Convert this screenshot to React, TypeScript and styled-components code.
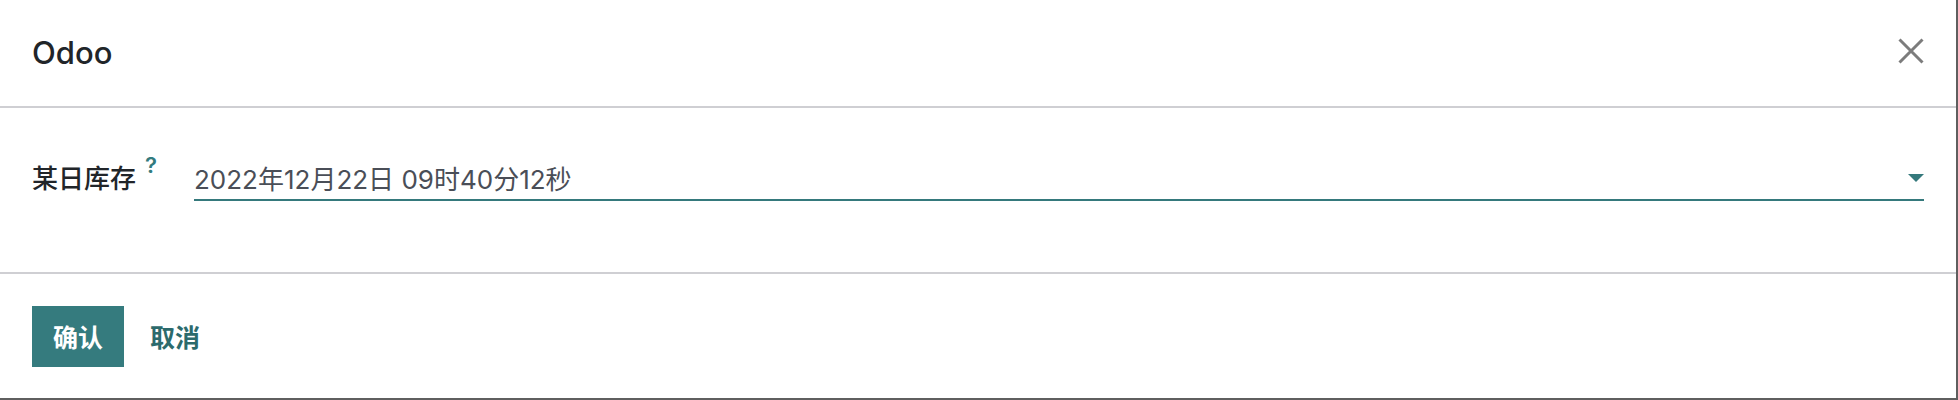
import React from 'react'
import styled, { createGlobalStyle } from 'styled-components'

const GlobalStyle = createGlobalStyle`
    html, body {
        margin: 0;
        padding: 0;
        background: #ffffff;
    }
    body {
        font-family: Inter, "Noto Sans CJK SC", sans-serif;
    }
`

const Dialog = styled.div`
    width: 1958px;
    height: 400px;
    box-sizing: border-box;
    border-right: 2px solid #5f5f5f;
    border-bottom: 2px solid #5f5f5f;
    background: #fff;
    display: flex;
    flex-direction: column;
`

const Header = styled.div`
    height: 108px;
    box-sizing: border-box;
    border-bottom: 2px solid #cfcfd3;
    display: flex;
    align-items: center;
    justify-content: space-between;
    padding: 0 32px 2px 32px;
`

const Title = styled.h4`
    margin: 0;
    font-family: Inter, "Noto Sans CJK SC", sans-serif;
    font-size: 31px;
    font-weight: 500;
    color: #212529;
`

const CloseButton = styled.button`
    border: none;
    background: none;
    padding: 0;
    width: 26px;
    height: 26px;
    margin-bottom: 2px;
    cursor: pointer;
    display: flex;
`

const Body = styled.div`
    height: 166px;
    box-sizing: border-box;
    border-bottom: 2px solid #cfcfd3;
    padding: 47px 32px 0 32px;
`

const FieldRow = styled.div`
    display: flex;
    align-items: center;
`

const Label = styled.label`
    width: 162px;
    flex-shrink: 0;
    display: flex;
    align-items: flex-start;
    font-family: "Noto Sans CJK SC", sans-serif;
    font-size: 26px;
    font-weight: 500;
    color: #212529;
    margin-top: -4px;
    sup {
        font-family: Inter, sans-serif;
        font-size: 22px;
        font-weight: 600;
        color: #337b7e;
        margin-left: 9px;
        margin-top: -6px;
    }
`

const DateInput = styled.div`
    flex: 1;
    height: 46px;
    box-sizing: border-box;
    border-bottom: 2px solid #35797c;
    display: flex;
    align-items: center;
    justify-content: space-between;
    font-family: Inter, "Noto Sans CJK SC", sans-serif;
    font-size: 26px;
    color: #4a4e57;
`

const Caret = styled.span`
    width: 0;
    height: 0;
    border-left: 8px solid transparent;
    border-right: 8px solid transparent;
    border-top: 8px solid #35797c;
    margin-top: 2px;
`

const Footer = styled.div`
    flex: 1;
    display: flex;
    align-items: center;
    gap: 5px;
    padding: 0 32px;
`

const Button = styled.button<{ primary?: boolean }>`
    height: 61px;
    padding: 0 21px;
    border: none;
    border-radius: 0;
    font-family: "Noto Sans CJK SC", sans-serif;
    font-size: 25px;
    font-weight: 700;
    cursor: pointer;
    background: ${props => props.primary ? "#357b7e" : "transparent"};
    color: ${props => props.primary ? "#ffffff" : "#2c6a6c"};
`

export default function App() {
    return (
        <>
            <GlobalStyle />
            <Dialog>
                <Header>
                    <Title>Odoo</Title>
                    <CloseButton aria-label="关闭">
                        <svg width="26" height="26" viewBox="0 0 26 26">
                            <path d="M1.5 1.5 L24.5 24.5 M24.5 1.5 L1.5 24.5" stroke="#7c7c7c" strokeWidth="3" />
                        </svg>
                    </CloseButton>
                </Header>
                <Body>
                    <FieldRow>
                        <Label>某日库存<sup>?</sup></Label>
                        <DateInput>
                            <span>2022年12月22日 09时40分12秒</span>
                            <Caret />
                        </DateInput>
                    </FieldRow>
                </Body>
                <Footer>
                    <Button primary>确认</Button>
                    <Button>取消</Button>
                </Footer>
            </Dialog>
        </>
    )
}
